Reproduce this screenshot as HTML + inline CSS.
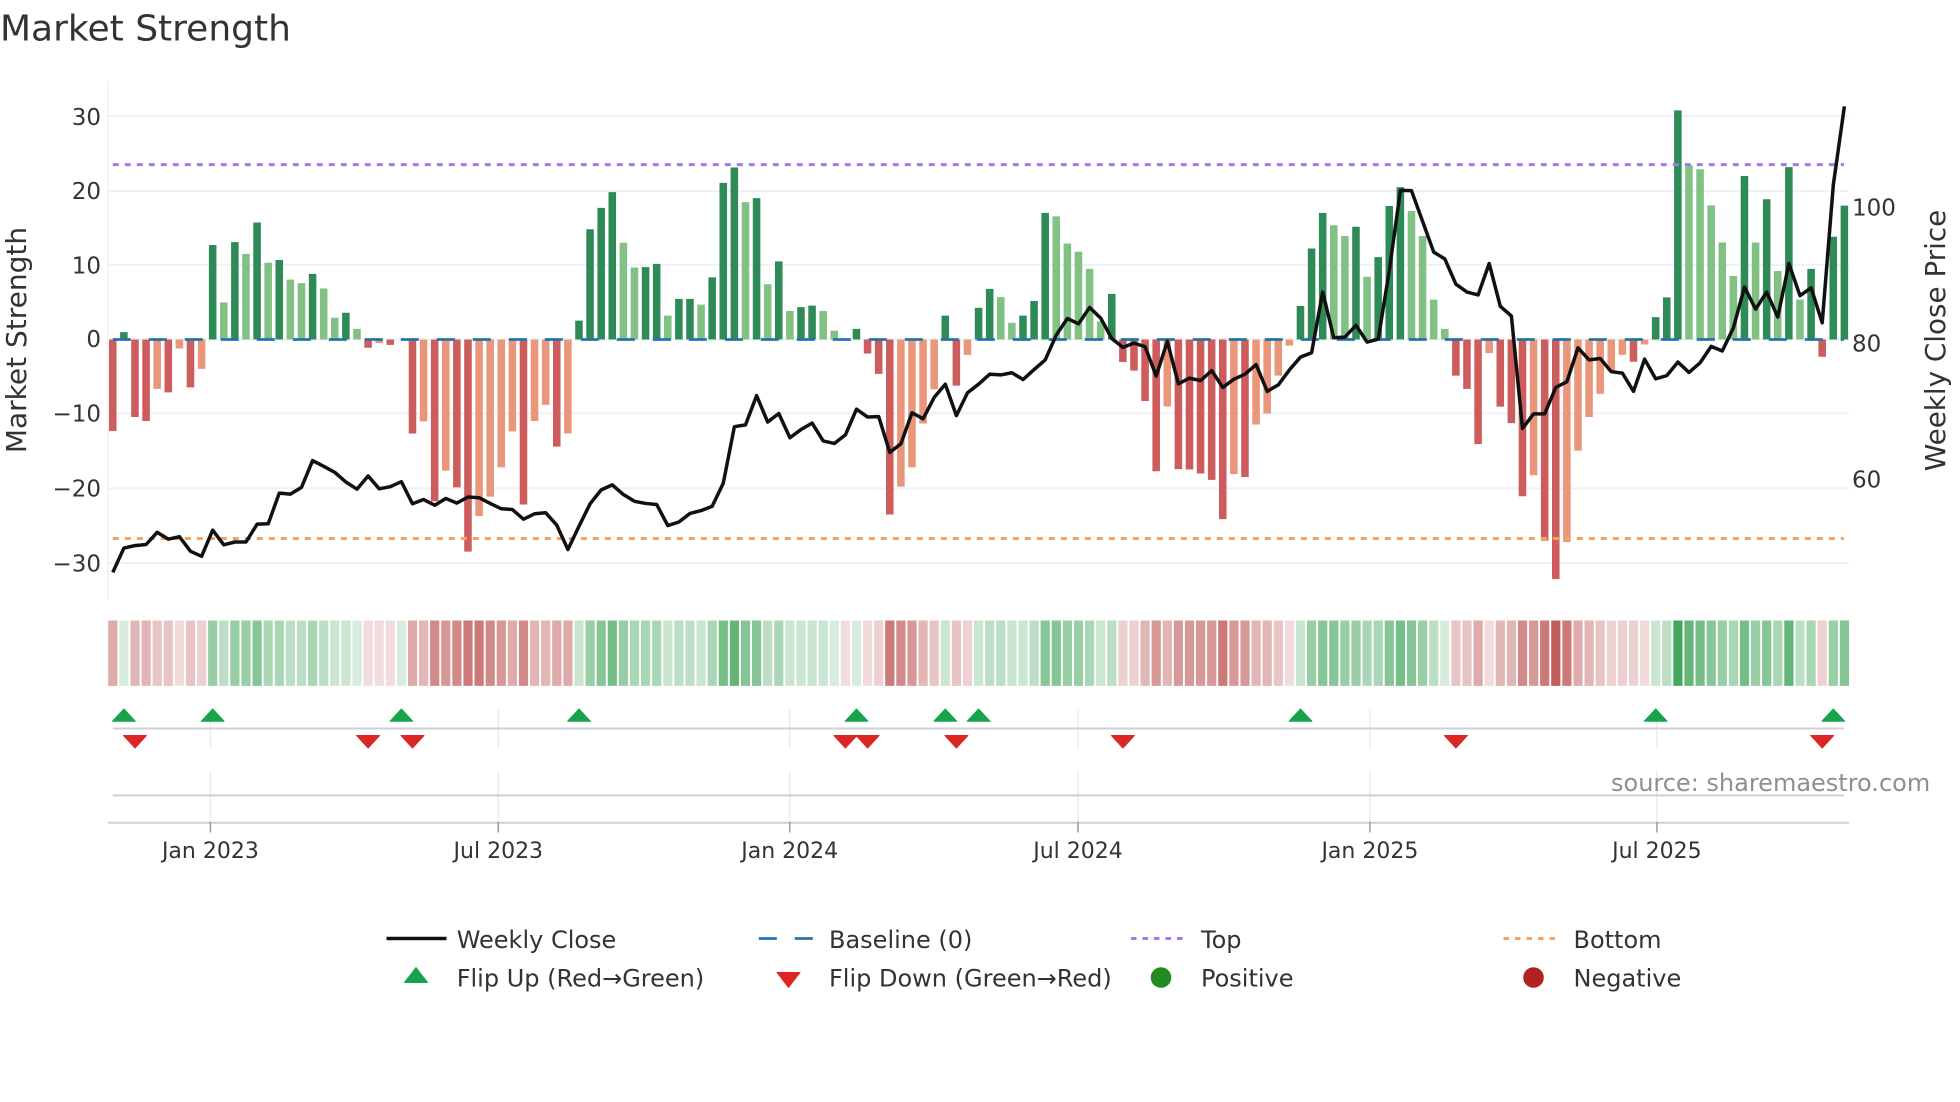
<!DOCTYPE html>
<html lang="en">
<head>
<meta charset="utf-8">
<title>Market Strength</title>
<style>
html,body{margin:0;padding:0;background:#fff;width:1960px;height:1102px;overflow:hidden}
svg{display:block;filter:blur(.35px)}
text{font-family:"DejaVu Sans","Liberation Sans",sans-serif;fill:#333}
.yt{font-size:23px;text-anchor:end}
.rt{font-size:23px}
.xt{font-size:22px;text-anchor:middle}
.lg{font-size:24px}
</style>
</head>
<body>
<svg width="1960" height="1102" viewBox="0 0 1960 1102" xmlns="http://www.w3.org/2000/svg">
<rect width="1960" height="1102" fill="#fff"/>
<text x="0" y="40.5" style="font-size:36px">Market Strength</text>

<!-- grid -->
<path d="M108 81V600" stroke="#eef0f5" stroke-width="1.5" fill="none"/>
<path d="M108 116.1H1849M108 191H1849M108 264.9H1849M108 339.5H1849M108 413.4H1849M108 488.4H1849M108 563H1849" stroke="#eff1f6" stroke-width="2" fill="none"/>

<!-- bars -->
<g transform="translate(109,60) scale(11.1,0.35704)">
<path fill="#2e8b57" d="M1 783V762h.68V783zM9 783V518h.68V783zM11 783V510h.68V783zM13 783V455h.68V783zM15 783V560h.68V783zM18 783V599h.68V783zM21 783V708h.68V783zM42 783V730h.68V783zM43 783V474h.68V783zM44 783V414h.68V783zM45 783V370h.68V783zM48 783V580h.68V783zM49 783V571h.68V783zM51 783V669h.68V783zM52 783V669h.68V783zM54 783V609h.68V783zM55 783V344h.68V783zM56 783V301h.68V783zM58 783V387h.68V783zM60 783V564h.68V783zM62 783V692h.68V783zM63 783V688h.68V783zM67 783V753h.68V783zM75 783V716h.68V783zM78 783V694h.68V783zM79 783V641h.68V783zM82 783V716h.68V783zM83 783V675h.68V783zM84 783V428h.68V783zM90 783V655h.68V783zM107 783V689h.68V783zM108 783V528h.68V783zM109 783V428h.68V783zM112 783V467h.68V783zM114 783V552h.68V783zM115 783V409h.68V783zM116 783V356h.68V783zM139 783V720h.68V783zM140 783V665h.68V783zM141 783V141h.68V783zM147 783V325h.68V783zM149 783V390h.68V783zM151 783V300h.68V783zM153 783V585h.68V783zM155 783V495h.68V783zM156 783V408h.68V783z"/>
<path fill="#81c184" d="M10 783V679h.68V783zM12 783V543h.68V783zM14 783V568h.68V783zM16 783V615h.68V783zM17 783V625h.68V783zM19 783V640h.68V783zM20 783V722h.68V783zM22 783V753h.68V783zM46 783V512h.68V783zM47 783V581h.68V783zM50 783V716h.68V783zM53 783V685h.68V783zM57 783V398h.68V783zM59 783V628h.68V783zM61 783V703h.68V783zM64 783V703h.68V783zM65 783V758h.68V783zM80 783V664h.68V783zM81 783V736h.68V783zM85 783V438h.68V783zM86 783V514h.68V783zM87 783V537h.68V783zM88 783V585h.68V783zM89 783V732h.68V783zM110 783V463h.68V783zM111 783V493h.68V783zM113 783V607h.68V783zM117 783V423h.68V783zM118 783V493h.68V783zM119 783V671h.68V783zM120 783V753h.68V783zM142 783V295h.68V783zM143 783V306h.68V783zM144 783V407h.68V783zM145 783V511h.68V783zM146 783V605h.68V783zM148 783V511h.68V783zM150 783V591h.68V783zM152 783V671h.68V783z"/>
<path fill="#cd5c5c" d="M0 783V1039h.68V783zM2 783V1000h.68V783zM3 783V1011h.68V783zM5 783V931h.68V783zM7 783V917h.68V783zM23 783V806h.68V783zM25 783V798h.68V783zM27 783V1046h.68V783zM29 783V1236h.68V783zM31 783V1197h.68V783zM32 783V1377h.68V783zM37 783V1245h.68V783zM40 783V1083h.68V783zM68 783V822h.68V783zM69 783V879h.68V783zM70 783V1273h.68V783zM76 783V912h.68V783zM91 783V846h.68V783zM92 783V870h.68V783zM93 783V955h.68V783zM94 783V1152h.68V783zM96 783V1146h.68V783zM97 783V1147h.68V783zM98 783V1158h.68V783zM99 783V1176h.68V783zM100 783V1286h.68V783zM102 783V1168h.68V783zM121 783V884h.68V783zM122 783V921h.68V783zM123 783V1076h.68V783zM125 783V971h.68V783zM126 783V1017h.68V783zM127 783V1222h.68V783zM129 783V1346h.68V783zM130 783V1454h.68V783zM137 783V845h.68V783zM154 783V831h.68V783z"/>
<path fill="#e9967a" d="M4 783V921h.68V783zM6 783V808h.68V783zM8 783V865h.68V783zM24 783V793h.68V783zM28 783V1012h.68V783zM30 783V1150h.68V783zM33 783V1277h.68V783zM34 783V1223h.68V783zM35 783V1141h.68V783zM36 783V1040h.68V783zM38 783V1011h.68V783zM39 783V966h.68V783zM41 783V1046h.68V783zM71 783V1195h.68V783zM72 783V1141h.68V783zM73 783V1018h.68V783zM74 783V922h.68V783zM77 783V826h.68V783zM95 783V970h.68V783zM101 783V1160h.68V783zM103 783V1021h.68V783zM104 783V990h.68V783zM105 783V884h.68V783zM106 783V800h.68V783zM124 783V821h.68V783zM128 783V1163h.68V783zM131 783V1350h.68V783zM132 783V1094h.68V783zM133 783V1000h.68V783zM134 783V935h.68V783zM135 783V872h.68V783zM136 783V826h.68V783zM138 783V797h.68V783z"/>
</g>

<!-- reference lines -->
<path d="M112.8 339.5H1844" stroke="#2474a8" stroke-width="2.8" stroke-dasharray="18 18" fill="none"/>
<path d="M112.8 164.6H1844" stroke="#a678e2" stroke-width="3" stroke-dasharray="6 6" fill="none"/>
<path d="M112.8 538.5H1844" stroke="#f4a460" stroke-width="3" stroke-dasharray="6 6" fill="none"/>

<!-- price line -->
<g transform="translate(112.8,60) scale(11.1,0.35704)">
<polyline fill="none" stroke="#111" stroke-width="3.5" stroke-linejoin="round" vector-effect="non-scaling-stroke" points="0,1435 1,1367 2,1360 3,1357 4,1323 5,1342 6,1335 7,1376 8,1390 9,1317 10,1358 11,1350 12,1350 13,1300 14,1299 15,1213 16,1216 17,1197 18,1122 19,1138 20,1155 21,1182 22,1202 23,1165 24,1201 25,1195 26,1181 27,1243 28,1231 29,1247 30,1228 31,1241 32,1224 33,1226 34,1242 35,1257 36,1259 37,1286 38,1271 39,1268 40,1303 41,1371 42,1306 43,1243 44,1204 45,1190 46,1217 47,1236 48,1242 49,1245 50,1304 51,1294 52,1270 53,1262 54,1250 55,1185 56,1027 57,1022 58,940 59,1014 60,990 61,1058 62,1035 63,1017 64,1067 65,1074 66,1050 67,978 68,1000 69,999 70,1099 71,1075 72,988 73,1005 74,945 75,908 76,996 77,932 78,908 79,880 80,882 81,876 82,895 83,867 84,840 85,770 86,724 87,739 88,693 89,723 90,780 91,805 92,793 93,803 94,885 95,788 96,907 97,891 98,898 99,870 100,917 101,894 102,880 103,853 104,928 105,910 106,868 107,832 108,820 109,650 110,778 111,776 112,743 113,790 114,782 115,590 116,365 117,366 118,452 119,538 120,557 121,628 122,650 123,658 124,570 125,690 126,717 127,1032 128,991 129,991 130,917 131,901 132,806 133,840 134,836 135,873 136,877 137,928 138,838 139,893 140,884 141,846 142,875 143,848 144,802 145,815 146,750 147,636 148,698 149,650 150,720 151,570 152,660 153,638 154,736 155,350 156,130"/>
</g>

<!-- y ticks -->
<text class="yt" x="101" y="124.8">30</text>
<text class="yt" x="101" y="198.8">20</text>
<text class="yt" x="101" y="273.3">10</text>
<text class="yt" x="101" y="347">0</text>
<text class="yt" x="101" y="421.5">−10</text>
<text class="yt" x="101" y="496.5">−20</text>
<text class="yt" x="101" y="571.5">−30</text>
<text class="rt" x="1852" y="215.4">100</text>
<text class="rt" x="1852" y="351.3">80</text>
<text class="rt" x="1852" y="487.7">60</text>
<text transform="translate(26,340) rotate(-90)" text-anchor="middle" style="font-size:28px">Market Strength</text>
<text transform="translate(1944.8,340.5) rotate(-90)" text-anchor="middle" style="font-size:27.8px">Weekly Close Price</text>

<!-- heat strip -->
<g transform="translate(108.2,620.5) scale(11.1,65.4)">
<g fill="#22963f">
<path fill-opacity=".18" d="M1 0h.83v1h-.83zM22 0h.83v1h-.83zM26 0h.83v1h-.83zM65 0h.83v1h-.83zM67 0h.83v1h-.83zM120 0h.83v1h-.83z"/>
<path fill-opacity=".24" d="M20 0h.83v1h-.83zM21 0h.83v1h-.83zM42 0h.83v1h-.83zM50 0h.83v1h-.83zM53 0h.83v1h-.83zM61 0h.83v1h-.83zM62 0h.83v1h-.83zM63 0h.83v1h-.83zM64 0h.83v1h-.83zM75 0h.83v1h-.83zM78 0h.83v1h-.83zM81 0h.83v1h-.83zM82 0h.83v1h-.83zM89 0h.83v1h-.83zM107 0h.83v1h-.83zM139 0h.83v1h-.83z"/>
<path fill-opacity=".31" d="M10 0h.83v1h-.83zM16 0h.83v1h-.83zM17 0h.83v1h-.83zM19 0h.83v1h-.83zM51 0h.83v1h-.83zM52 0h.83v1h-.83zM59 0h.83v1h-.83zM79 0h.83v1h-.83zM80 0h.83v1h-.83zM83 0h.83v1h-.83zM90 0h.83v1h-.83zM119 0h.83v1h-.83zM140 0h.83v1h-.83zM152 0h.83v1h-.83z"/>
<path fill-opacity=".39" d="M14 0h.83v1h-.83zM15 0h.83v1h-.83zM18 0h.83v1h-.83zM47 0h.83v1h-.83zM48 0h.83v1h-.83zM49 0h.83v1h-.83zM54 0h.83v1h-.83zM60 0h.83v1h-.83zM88 0h.83v1h-.83zM113 0h.83v1h-.83zM114 0h.83v1h-.83zM146 0h.83v1h-.83zM150 0h.83v1h-.83zM153 0h.83v1h-.83z"/>
<path fill-opacity=".47" d="M9 0h.83v1h-.83zM11 0h.83v1h-.83zM12 0h.83v1h-.83zM43 0h.83v1h-.83zM46 0h.83v1h-.83zM86 0h.83v1h-.83zM87 0h.83v1h-.83zM108 0h.83v1h-.83zM111 0h.83v1h-.83zM112 0h.83v1h-.83zM118 0h.83v1h-.83zM145 0h.83v1h-.83zM148 0h.83v1h-.83zM155 0h.83v1h-.83z"/>
<path fill-opacity=".55" d="M13 0h.83v1h-.83zM44 0h.83v1h-.83zM57 0h.83v1h-.83zM58 0h.83v1h-.83zM84 0h.83v1h-.83zM85 0h.83v1h-.83zM109 0h.83v1h-.83zM110 0h.83v1h-.83zM115 0h.83v1h-.83zM117 0h.83v1h-.83zM144 0h.83v1h-.83zM149 0h.83v1h-.83zM156 0h.83v1h-.83z"/>
<path fill-opacity=".62" d="M45 0h.83v1h-.83zM55 0h.83v1h-.83zM116 0h.83v1h-.83zM143 0h.83v1h-.83zM147 0h.83v1h-.83z"/>
<path fill-opacity=".7" d="M56 0h.83v1h-.83zM142 0h.83v1h-.83zM151 0h.83v1h-.83z"/>
<path fill-opacity=".85" d="M141 0h.83v1h-.83z"/>
</g>
<g fill="#b23a3a">
<path fill-opacity=".18" d="M6 0h.83v1h-.83zM23 0h.83v1h-.83zM24 0h.83v1h-.83zM25 0h.83v1h-.83zM66 0h.83v1h-.83zM68 0h.83v1h-.83zM106 0h.83v1h-.83zM124 0h.83v1h-.83zM138 0h.83v1h-.83z"/>
<path fill-opacity=".24" d="M8 0h.83v1h-.83zM69 0h.83v1h-.83zM77 0h.83v1h-.83zM91 0h.83v1h-.83zM92 0h.83v1h-.83zM135 0h.83v1h-.83zM136 0h.83v1h-.83zM137 0h.83v1h-.83zM154 0h.83v1h-.83z"/>
<path fill-opacity=".3" d="M4 0h.83v1h-.83zM5 0h.83v1h-.83zM7 0h.83v1h-.83zM74 0h.83v1h-.83zM76 0h.83v1h-.83zM105 0h.83v1h-.83zM121 0h.83v1h-.83zM122 0h.83v1h-.83zM134 0h.83v1h-.83z"/>
<path fill-opacity=".37" d="M2 0h.83v1h-.83zM3 0h.83v1h-.83zM28 0h.83v1h-.83zM38 0h.83v1h-.83zM39 0h.83v1h-.83zM73 0h.83v1h-.83zM93 0h.83v1h-.83zM95 0h.83v1h-.83zM103 0h.83v1h-.83zM104 0h.83v1h-.83zM125 0h.83v1h-.83zM126 0h.83v1h-.83zM133 0h.83v1h-.83z"/>
<path fill-opacity=".43" d="M0 0h.83v1h-.83zM27 0h.83v1h-.83zM36 0h.83v1h-.83zM40 0h.83v1h-.83zM41 0h.83v1h-.83zM123 0h.83v1h-.83zM132 0h.83v1h-.83z"/>
<path fill-opacity=".52" d="M30 0h.83v1h-.83zM35 0h.83v1h-.83zM72 0h.83v1h-.83zM94 0h.83v1h-.83zM96 0h.83v1h-.83zM97 0h.83v1h-.83zM98 0h.83v1h-.83zM99 0h.83v1h-.83zM101 0h.83v1h-.83zM102 0h.83v1h-.83zM128 0h.83v1h-.83z"/>
<path fill-opacity=".6" d="M29 0h.83v1h-.83zM31 0h.83v1h-.83zM34 0h.83v1h-.83zM37 0h.83v1h-.83zM71 0h.83v1h-.83zM127 0h.83v1h-.83z"/>
<path fill-opacity=".68" d="M33 0h.83v1h-.83zM70 0h.83v1h-.83zM100 0h.83v1h-.83zM32 0h.83v1h-.83zM129 0h.83v1h-.83zM131 0h.83v1h-.83z"/>
<path fill-opacity=".82" d="M130 0h.83v1h-.83z"/>
</g>
</g>

<!-- flip panel -->
<path d="M210.4 709V748.5M498.3 709V748.5M789.7 709V748.5M1078 709V748.5M1369.9 709V748.5M1656.9 709V748.5M210.4 771V823M498.3 771V823M789.7 771V823M1078 771V823M1369.9 771V823M1656.9 771V823" stroke="#e9ebf0" stroke-width="1.5" fill="none"/>
<path d="M112.8 728.5H1844M112.8 795.4H1844" stroke="#d0d0d4" stroke-width="2" fill="none"/>
<path d="M108.2 822.7H1849" stroke="#cfcfd3" stroke-width="2" fill="none"/>
<path d="M210.4 822V832.5M498.3 822V832.5M789.7 822V832.5M1078 822V832.5M1369.9 822V832.5M1656.9 822V832.5" stroke="#999" stroke-width="1.5" fill="none"/>
<g transform="translate(0,-2.5)">
<path fill="#16a34a" stroke="#16a34a" stroke-width="1" stroke-linejoin="round" d="M112.4 723.8l11.5-12.3 11.5 12.3zM201.2 723.8l11.5-12.3 11.5 12.3zM389.9 723.8l11.5-12.3 11.5 12.3zM567.5 723.8l11.5-12.3 11.5 12.3zM845 723.8l11.5-12.3 11.5 12.3zM933.8 723.8l11.5-12.3 11.5 12.3zM967.1 723.8l11.5-12.3 11.5 12.3zM1289 723.8l11.5-12.3 11.5 12.3zM1644.2 723.8l11.5-12.3 11.5 12.3zM1821.8 723.8l11.5-12.3 11.5 12.3z"/>
<path fill="#dc2626" stroke="#dc2626" stroke-width="1" stroke-linejoin="round" d="M123.5 738l11.5 12.5 11.5-12.5zM356.6 738l11.5 12.5 11.5-12.5zM401 738l11.5 12.5 11.5-12.5zM833.9 738l11.5 12.5 11.5-12.5zM856.1 738l11.5 12.5 11.5-12.5zM944.9 738l11.5 12.5 11.5-12.5zM1111.4 738l11.5 12.5 11.5-12.5zM1444.4 738l11.5 12.5 11.5-12.5zM1810.7 738l11.5 12.5 11.5-12.5z"/>
</g>

<text x="1619" y="796" style="font-size:24px;fill:#8f8f8f" transform="translate(-8,-5)">source: sharemaestro.com</text>

<!-- x ticks -->
<text class="xt" x="210.4" y="858">Jan 2023</text>
<text class="xt" x="498.3" y="858">Jul 2023</text>
<text class="xt" x="789.7" y="858">Jan 2024</text>
<text class="xt" x="1078" y="858">Jul 2024</text>
<text class="xt" x="1369.9" y="858">Jan 2025</text>
<text class="xt" x="1656.9" y="858">Jul 2025</text>

<!-- legend -->
<path d="M386.5 938.5H446.5" stroke="#111" stroke-width="3.5" fill="none"/>
<text class="lg" x="456.7" y="948">Weekly Close</text>
<path d="M758.8 938.5H813" stroke="#2474a8" stroke-width="2.8" stroke-dasharray="18 18" fill="none"/>
<text class="lg" x="829" y="948">Baseline (0)</text>
<path d="M1131 938.5H1186" stroke="#a678e2" stroke-width="3" stroke-dasharray="5.5 6" fill="none"/>
<text class="lg" x="1201" y="948">Top</text>
<path d="M1503.5 938.5H1559" stroke="#f4a460" stroke-width="3" stroke-dasharray="5.5 6" fill="none"/>
<text class="lg" x="1573.5" y="948">Bottom</text>

<path d="M404.5 982.5l11.5-15 11.5 15z" fill="#16a34a" stroke="#16a34a" stroke-width="1" stroke-linejoin="round"/>
<text class="lg" x="456.7" y="986.5">Flip Up (Red→Green)</text>
<path d="M777 972.5l11.5 15 11.5-15z" fill="#dc2626" stroke="#dc2626" stroke-width="1" stroke-linejoin="round"/>
<text class="lg" x="829" y="986.5">Flip Down (Green→Red)</text>
<circle cx="1161" cy="977.5" r="10.3" fill="#228b22"/>
<text class="lg" x="1201" y="986.5">Positive</text>
<circle cx="1533.5" cy="977.5" r="10.3" fill="#b22222"/>
<text class="lg" x="1573.5" y="986.5">Negative</text>
</svg>
</body>
</html>
